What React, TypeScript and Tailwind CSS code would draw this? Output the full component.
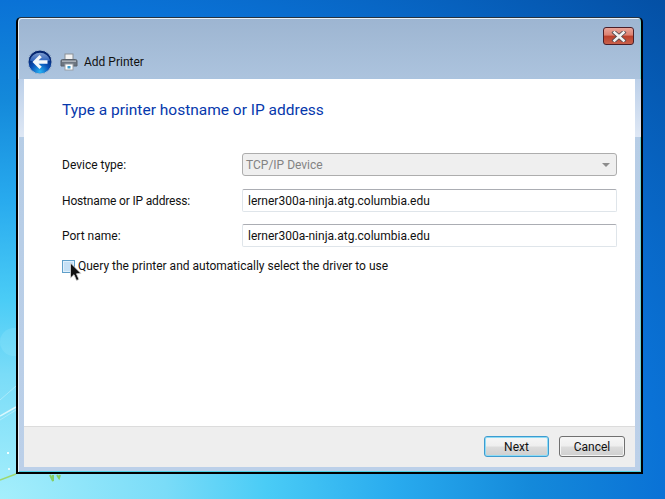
export default function App() {
  const field = "h-[23px] w-[375px] flex items-center pl-[5px] text-[12px] bg-white border border-[#dfe5ea] border-t-[#abadb3] rounded-[2px] text-[#111]";
  return (
    <div className="relative w-[665px] h-[499px] overflow-hidden pt-[17px] pl-[16px] bg-[radial-gradient(ellipse_665px_499px_at_0%_100%,#a5effc_0%,#7adcf8_25%,#4accf6_40%,#28aaee_60%,#1489da_80%,#0a72d6_100%,#0450a5_141%)]" style={{ fontFamily: 'Roboto,"Open Sans",sans-serif' }}>
      <svg className="absolute left-0 top-[320px]" width="70" height="179" viewBox="0 0 70 179">
        <circle cx="14" cy="22" r="14" fill="#c4f6ff" opacity="0.15" />
        <path d="M0 80 L16 66 M0 100 L16 90" stroke="#e6fbff" strokeWidth="1" opacity="0.4" />
        <path d="M0 96 L16 87" stroke="#f0fdff" strokeWidth="1.5" opacity="0.8" />
        <rect x="7" y="132" width="2" height="2" fill="#f0ffff" />
        <rect x="8" y="148" width="2" height="2" fill="#e0fbff" />
        <path d="M0 160 L16 154" stroke="#9ed86f" strokeWidth="1.6" />
        <path d="M50 155 L53 161 L53 155 M57 155 L59 158 L60 155" stroke="#85cf63" strokeWidth="2" fill="none" />
      </svg>

      <div className="relative w-[627px] h-[457px] flex flex-col border-2 border-t border-black border-t-[#26323f] rounded-t-[5px] bg-[linear-gradient(180deg,#9db5d1_0%,#b6cde6_22%,#bcd0e9_100%)] px-[6px] pb-[5px] shadow-[inset_1px_1px_0_#e8f2fa,inset_-1px_0_0_#6fd0d8,inset_0_-1px_0_#4fd0e6]">
        <div className="absolute left-0 top-[61px] w-[6px] h-[58px] bg-[linear-gradient(180deg,#bcd0e9_0%,#dfe8f5_100%)]" />
        <div className="absolute right-0 top-[61px] w-[6px] h-[58px] bg-[linear-gradient(180deg,#bcd0e9_0%,#dfe8f5_100%)]" />
        <div className="h-[60px] flex shrink-0 relative">
          <div className="absolute right-[1px] top-[9px] w-[31px] h-[18px] rounded-[3px] border border-[#4a1f28] bg-[linear-gradient(180deg,#e9a498_0%,#dc8070_45%,#bc3f2a_50%,#c8614c_100%)] flex items-center justify-center">
            <svg width="16" height="11" viewBox="0 0 16 11">
              <path d="M3.5 1.5 L12.5 9.5 M12.5 1.5 L3.5 9.5" stroke="#50494e" strokeWidth="4.2" strokeLinecap="square" />
              <path d="M3.5 1.5 L12.5 9.5 M12.5 1.5 L3.5 9.5" stroke="#f2f2f2" strokeWidth="2.6" strokeLinecap="square" />
            </svg>
          </div>
          <div className="flex items-center mt-[31px] h-[26px] ml-[3px]">
            <svg width="26" height="26" viewBox="0 0 26 26" className="shrink-0">
              <defs>
                <radialGradient id="b" cx="50%" cy="90%" r="70%">
                  <stop offset="0" stopColor="#27b4f5" />
                  <stop offset="0.55" stopColor="#0a4fb5" />
                  <stop offset="1" stopColor="#052670" />
                </radialGradient>
                <linearGradient id="s" x1="0" y1="0" x2="0" y2="1">
                  <stop offset="0" stopColor="#a5c3ee" />
                  <stop offset="1" stopColor="#2a62c4" />
                </linearGradient>
              </defs>
              <circle cx="13" cy="13" r="12" fill="url(#b)" stroke="#a3b9d3" strokeWidth="1" />
              <path d="M2.8 11.5 A10.4 9.5 0 0 1 23.2 11.5 Q13 15 2.8 11.5Z" fill="url(#s)" opacity="0.75" />
              <path d="M12.5 6 L5.5 13 L12.5 20 L14.8 17.7 L11.6 14.8 L20.5 14.8 L20.5 11.2 L11.6 11.2 L14.8 8.3 Z" fill="#f4f7fb" />
            </svg>
            <svg width="18" height="18" viewBox="0 0 18 18" className="ml-[7px] shrink-0">
              <rect x="5" y="1" width="8" height="6" fill="#f2f2f2" stroke="#8a8f96" />
              <path d="M2.5 6.5 H15.5 Q17 6.5 17 8 V13 H1 V8 Q1 6.5 2.5 6.5Z" fill="#6d7681" stroke="#5a626c" />
              <rect x="2" y="7.5" width="14" height="1.5" fill="#a9b0b8" />
              <rect x="5" y="11" width="8" height="6" fill="#ffffff" stroke="#9aa0a6" />
              <rect x="7.5" y="13" width="3" height="2.5" fill="#3d9bc9" />
            </svg>
            <span className="ml-[6px] text-[12px] text-[#111]">Add Printer</span>
          </div>
        </div>

        <div className="flex-1 bg-white flex flex-col border-t border-[#a9c3df]">
          <div className="flex-1 pl-[38px] pt-[20px] relative">
            <div className="text-[15.5px] leading-[22px] text-[#0638ac]">Type a printer hostname or IP address</div>
            <div className="mt-[32px] flex flex-col">
              <div className="flex items-center">
                <span className="w-[180px] text-[12px] text-[#111]">Device type:</span>
                <div className="h-[23px] w-[375px] flex items-center justify-between px-[3px] pr-[6px] text-[12px] text-[#838383] bg-[#efefef] border border-[#adadad] rounded-[3px]">
                  <span>TCP/IP Device</span>
                  <span className="w-0 h-0 border-x-[4px] border-x-transparent border-t-[4px] border-t-[#8c8c8c]" />
                </div>
              </div>
              <div className="flex items-center mt-[13px]">
                <span className="w-[180px] text-[12px] tracking-[-0.17px] text-[#111]">Hostname or IP address:</span>
                <div className={field}>lerner300a-ninja.atg.columbia.edu</div>
              </div>
              <div className="flex items-center mt-[12px]">
                <span className="w-[180px] text-[12px] text-[#111]">Port name:</span>
                <div className={field}>lerner300a-ninja.atg.columbia.edu</div>
              </div>
            </div>
            <div className="flex items-center mt-[13px] h-[13px]">
              <span className="w-[13px] h-[13px] border-[1.5px] border-[#5f9fc9] bg-[#c5e0f5] shadow-[inset_0_0_0_1px_#e0f0fc]" />
              <span className="ml-[3px] -mt-[1px] text-[12px] text-[#111]">Query the printer and automatically select the driver to use</span>
            </div>
            <svg className="absolute left-[45px] top-[183px]" width="13" height="20" viewBox="0 0 13 20">
              <path d="M1.5 1 V16 L5 12.7 L7.5 18.5 L10 17.4 L7.5 11.8 L12 11.5 Z" fill="#111" stroke="#ddd" strokeWidth="0.8" />
            </svg>
          </div>
          <div className="h-[41px] shrink-0 bg-[#eeeeee] border-t border-[#dcdcdc] flex items-start justify-end gap-[10px] pt-[9px] pr-[10px]">
            <div className="w-[65px] h-[21px] rounded-[3px] border border-[#3d9bd0] shadow-[inset_0_0_0_1px_#8fdcf5] bg-[linear-gradient(180deg,#f6f6f6_0%,#eeeeee_48%,#dcdcdc_52%,#cfcfcf_100%)] flex items-center justify-center text-[12px] text-[#111]">Next</div>
            <div className="w-[66px] h-[21px] rounded-[3px] border border-[#707070] shadow-[inset_0_0_0_1px_#f5f5f5] bg-[linear-gradient(180deg,#f6f6f6_0%,#eeeeee_48%,#dcdcdc_52%,#cfcfcf_100%)] flex items-center justify-center text-[12px] text-[#111]">Cancel</div>
          </div>
        </div>
      </div>
    </div>
  );
}
